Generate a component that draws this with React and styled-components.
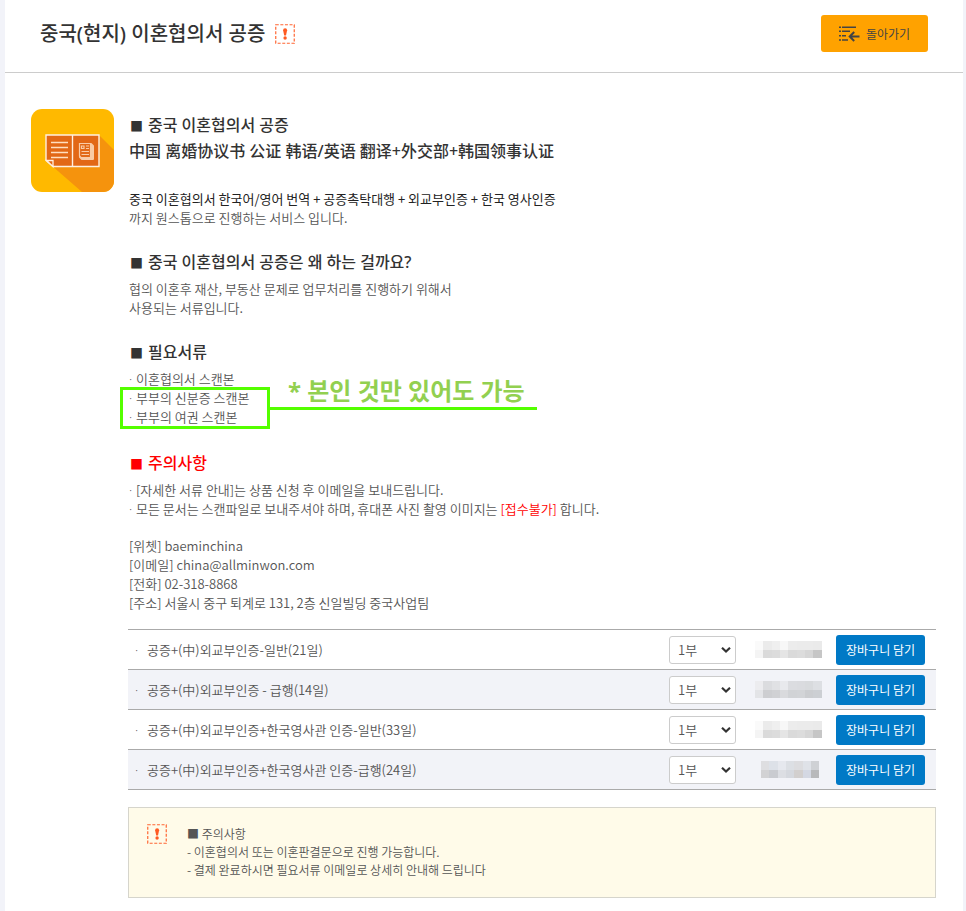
import React from "react";
import styled, { createGlobalStyle } from "styled-components";

const Global = createGlobalStyle`
  * { box-sizing: border-box; }
  body {
    margin: 0;
    background: #f2f3f9;
    color: #555;
    font: 350 13px/19px "Noto Sans CJK KR", "Noto Sans", sans-serif;
  }
  button, select { font: inherit; }
`;

const Page = styled.div`
  margin: 0 3px 0 5px;
  min-height: 100vh;
  background: #fff;
`;

const Header = styled.header`
  display: flex;
  align-items: center;
  justify-content: space-between;
  padding: 15px 35px 20px;
  border-bottom: 1px solid #ccc;
`;

const Title = styled.h1`
  display: flex;
  align-items: center;
  gap: 10px;
  margin: 0;
  font-family: "Noto Sans", "Noto Sans CJK KR", sans-serif;
  font-size: 20px;
  line-height: 30px;
  font-weight: 500;
  color: #333;
`;

const BackButton = styled.button`
  display: flex;
  align-items: center;
  justify-content: center;
  gap: 6px;
  width: 107px;
  height: 37px;
  padding: 0;
  border: 0;
  border-radius: 3px;
  background: #ffa200;
  color: #444;
  font-size: 12px;
  font-weight: 400;
  cursor: pointer;
`;

const Main = styled.main`
  display: grid;
  grid-template-columns: 82px 1fr;
  column-gap: 15px;
  align-items: start;
  padding: 36px 27px 13px 26px;
`;

const Content = styled.div`
  padding-top: 3px;
  min-width: 0;
`;

const Section = styled.section`
  margin: 0 1px 22px;
`;

const Heading = styled.h2`
  margin: 0 0 4px;
  font-family: "Noto Sans", "Noto Sans CJK KR", sans-serif;
  font-size: 16px;
  line-height: 26px;
  font-weight: 500;
  color: ${(p) => (p.$alert ? "#f00" : "#333")};
`;

const Square = styled.span`
  display: inline-block;
  width: 19px;
  padding-left: 1px;
  font-family: "Noto Sans CJK KR", sans-serif;
  font-size: 13px;
  line-height: 19px;
`;

const Subtitle = styled.p`
  margin: -4px 0 25px;
  font-family: "Noto Sans", "Noto Sans CJK SC", sans-serif;
  font-size: 16px;
  line-height: 26px;
  font-weight: 500;
  color: #333;
`;

const Text = styled.p`
  margin: 0;
`;

const Strong = styled.strong`
  font-weight: 400;
  color: #222;
`;

const Red = styled.span`
  color: #f00;
`;

const List = styled.ul`
  margin: 0;
  padding: 0 0 2px;
  list-style: none;
`;

const Dot = styled.span`
  display: inline-block;
  width: ${(p) => (p.$wide ? "12px" : "7px")};
  font-family: "Noto Sans", sans-serif;
  line-height: 18px;
`;

const Marked = styled.div`
  position: relative;
  width: max-content;
`;

const MarkBox = styled.span`
  position: absolute;
  top: -1px;
  left: -9px;
  width: 150px;
  height: 42px;
  border: 3px solid #54ff00;
`;

const MarkNote = styled.strong`
  position: absolute;
  top: -13px;
  left: 141px;
  width: 267px;
  padding-left: 18px;
  border-bottom: 3px solid #54ff00;
  color: #92d050;
  font-family: "Noto Sans", "Noto Sans CJK KR", sans-serif;
  font-size: 24px;
  line-height: 32px;
  font-weight: 700;
  white-space: nowrap;
`;

const Contact = styled.address`
  margin: -4px 1px 17px;
  font-style: normal;
`;

const OrderTable = styled.table`
  width: 100%;
  border-collapse: collapse;
  border-top: 1px solid #aaa;
`;

const Row = styled.tr`
  height: 40px;
  border-bottom: 1px solid #aaa;
  &:nth-child(even) { background: #f2f3f8; }
`;

const NameCell = styled.th`
  padding: 0 0 0 7px;
  text-align: left;
  font-weight: inherit;
`;

const Cell = styled.td`
  width: ${(p) => p.$width};
  padding: 0;
  svg, select, button { display: block; }
`;

const QuantityBox = styled.div`
  display: grid;
  align-items: center;
  width: 67px;
  > * { grid-area: 1 / 1; }
  svg {
    justify-self: end;
    margin-right: 5px;
    pointer-events: none;
  }
`;

const Quantity = styled.select`
  appearance: none;
  width: 100%;
  height: 28px;
  padding: 0 8px;
  border: 1px solid #ccc;
  border-radius: 3px;
  background: #fff;
  color: #555;
`;

const CartButton = styled.button`
  width: 89px;
  height: 30px;
  padding: 0;
  border: 0;
  border-radius: 3px;
  background: #0079c6;
  color: #fff;
  font-size: 12px;
  font-weight: 400;
  cursor: pointer;
`;

const Notice = styled.aside`
  display: flex;
  gap: 20px;
  margin-top: 17px;
  padding: 16px 18px 18px;
  border: 1px solid #d6d5cc;
  background: #fffbe9;
  font-size: 12px;
  line-height: 18px;
`;

const NoticeText = styled.div`
  padding-top: 1px;
`;

function AlertIcon() {
  return (
    <svg width="20" height="20" viewBox="0 0 20 20" aria-hidden="true">
      <path d="M.75.75h18.5v18.5H.75z" fill="none" stroke="#ff6633" strokeWidth="1.2" strokeDasharray="3 1.6" />
      <path d="M8.1 6.3a2 2 0 0 1 4 0L11 11.6H9.2z" fill="#ff5a22" />
      <circle cx="10.1" cy="14" r="1.7" fill="#ff5a22" />
    </svg>
  );
}

function BackIcon() {
  return (
    <svg width="21" height="16" viewBox="0 0 21 16" fill="none" stroke="#444" strokeWidth="1.5" aria-hidden="true">
      <path d="M0 1.2h2M3 1.2h14M0 5.2h2M3 5.2h8M0 9.7h2M3 9.7h4M0 14h2M3 14h6" />
      <path d="M20.5 10.5H11M15.2 6l-4.5 4.5 4.5 4.5" strokeWidth="2" />
    </svg>
  );
}

function ChevronIcon() {
  return (
    <svg width="10" height="6" viewBox="0 0 10 6" fill="none" stroke="#333" strokeWidth="2.2" aria-hidden="true">
      <path d="M1 .8l4 3.700 4-3.700" />
    </svg>
  );
}

function DocumentIcon() {
  return (
    <svg width="83" height="83" viewBox="0 0 83 83" aria-hidden="true">
      <defs>
        <clipPath id="tile"><rect width="83" height="83" rx="11" /></clipPath>
      </defs>
      <g clipPath="url(#tile)">
        <path fill="#ffb900" d="M0 0h83v83H0z" />
        <path fill="#f5930d" d="M68 26l15 15v42H51L20 56z" />
      </g>
      <path fill="#e26816" stroke="#fff0df" strokeWidth="1.4" d="M15 26h53v31.500H22l-7-6z" />
      <path stroke="#fff0df" strokeWidth="1.4" d="M41.500 26v31.500" />
      <path fill="#e26816" stroke="#fff0df" strokeWidth="1.3" d="M15.500 51.500H22v6z" />
      <path stroke="#ffdfc0" strokeWidth="1.700" d="M20 33.500h17M20 38.500h17M20 43.500h17M20 48.500h17" />
      <path fill="#f9cba6" stroke="#f9cba6" strokeWidth="2" strokeLinejoin="round" d="M50 35h10l2 2v13H51l-2-2V35z" />
      <path fill="#e26816" stroke="#f9cba6" strokeWidth="1.200" d="M48.500 34.500H59.500V48.500H50l-1.500-1.500z" />
      <path fill="none" stroke="#f9cba6" strokeWidth="1.200" d="M50.500 37h2.500v2.500h-2.500zM55 37H58M55 39.500H58M50.500 42.500H58M50.500 45.500H58" />
    </svg>
  );
}

const LIGHT = ["#fafafa", "#ebebeb", "#efefef", "#f7f7f7", "#ececec", "#ebebeb", "#ebebeb", "#eaeaea", "#f4f4f4", "#dadada", "#dcdcdc", "#e5e5e5", "#dadada", "#dcdcdc", "#d6d6d6", "#c6c6c6"];
const COOL = ["#ececef", "#dbdcdf", "#e0e1e4", "#e8e9ed", "#dbdce0", "#dadbdf", "#d8dadd", "#dddfe3", "#e3e4e7", "#cdced1", "#d0d1d4", "#d9dadd", "#d1d3d6", "#d2d4d7", "#cbcdd0", "#cccfd3"];
const SHORT = ["#dedee1", "#dde1e8", "#e6e8ee", "#dcdfe4", "#dcdcdf", "#dfe2e8", "#cfd1d5", "#d2d2d4", "#c9cbd0", "#dcdee3", "#d5d8de", "#d2cfce", "#d4d8e3", "#b8b9bb"];

function MaskedPrice({ cells }) {
  const columns = cells.length / 2;
  return (
    <svg width="90" height="18" viewBox="0 0 90 18" role="img" aria-label="가격" shapeRendering="crispEdges">
      {cells.map((fill, i) => (
        <rect
          key={i}
          x={(columns === 7 ? 25 : 19) + (i % columns) * 8.300}
          y={i < columns ? 0 : 8.500}
          width={8.400}
          height={8.500}
          fill={fill}
        />
      ))}
    </svg>
  );
}

const products = [
  { name: "공증+(中)외교부인증-일반(21일)", cells: LIGHT },
  { name: "공증+(中)외교부인증 - 급행(14일)", cells: COOL },
  { name: "공증+(中)외교부인증+한국영사관 인증-일반(33일)", cells: LIGHT },
  { name: "공증+(中)외교부인증+한국영사관 인증-급행(24일)", cells: SHORT },
];

export default function App() {
  return (
    <Page>
      <Global />
      <Header>
        <Title>중국(현지) 이혼협의서 공증 <AlertIcon /></Title>
        <BackButton type="button"><BackIcon />돌아가기</BackButton>
      </Header>
      <Main>
        <DocumentIcon />
        <Content>
          <Section>
            <Heading><Square>■</Square>중국 이혼협의서 공증</Heading>
            <Subtitle lang="zh">中国 离婚协议书 公证 韩语/英语 翻译+外交部+韩国领事认证</Subtitle>
            <Text>
              <Strong>중국 이혼협의서 한국어/영어 번역 + 공증촉탁대행 + 외교부인증 + 한국 영사인증</Strong>
              <br />까지 원스톱으로 진행하는 서비스 입니다.
            </Text>
          </Section>
          <Section>
            <Heading><Square>■</Square>중국 이혼협의서 공증은 왜 하는 걸까요?</Heading>
            <Text>협의 이혼후 재산, 부동산 문제로 업무처리를 진행하기 위해서<br />사용되는 서류입니다.</Text>
          </Section>
          <Section>
            <Heading><Square>■</Square>필요서류</Heading>
            <List>
              <li><Dot>·</Dot>이혼협의서 스캔본</li>
              <li>
                <Marked>
                  <Dot>·</Dot>부부의 신분증 스캔본<br /><Dot>·</Dot>부부의 여권 스캔본
                  <MarkBox />
                  <MarkNote>* 본인 것만 있어도 가능</MarkNote>
                </Marked>
              </li>
            </List>
          </Section>
          <Section>
            <Heading $alert><Square>■</Square>주의사항</Heading>
            <Text>
              <Dot>·</Dot>[자세한 서류 안내]는 상품 신청 후 이메일을 보내드립니다.<br />
              <Dot>·</Dot>모든 문서는 스캔파일로 보내주셔야 하며, 휴대폰 사진 촬영 이미지는 <Red>[접수불가]</Red> 합니다.
            </Text>
          </Section>
          <Contact>
            [위쳇] baeminchina<br />
            [이메일] china@allminwon.com<br />
            [전화] 02-318-8868<br />
            [주소] 서울시 중구 퇴계로 131, 2층 신일빌딩 중국사업팀
          </Contact>
          <OrderTable>
            <tbody>
              {products.map(({ name, cells }) => (
                <Row key={name}>
                  <NameCell scope="row"><Dot $wide>·</Dot>{name}</NameCell>
                  <Cell $width="67px">
                    <QuantityBox>
                      <Quantity aria-label={`${name} 부수`} defaultValue="1">
                        <option value="1">1부</option>
                        <option value="2">2부</option>
                        <option value="3">3부</option>
                      </Quantity>
                      <ChevronIcon />
                    </QuantityBox>
                  </Cell>
                  <Cell $width="100px"><MaskedPrice cells={cells} /></Cell>
                  <Cell $width="100px"><CartButton type="button">장바구니 담기</CartButton></Cell>
                </Row>
              ))}
            </tbody>
          </OrderTable>
          <Notice>
            <AlertIcon />
            <NoticeText>
              ■ 주의사항<br />
              - 이혼협의서 또는 이혼판결문으로 진행 가능합니다.<br />
              - 결제 완료하시면 필요서류 이메일로 상세히 안내해 드립니다
            </NoticeText>
          </Notice>
        </Content>
      </Main>
    </Page>
  );
}
